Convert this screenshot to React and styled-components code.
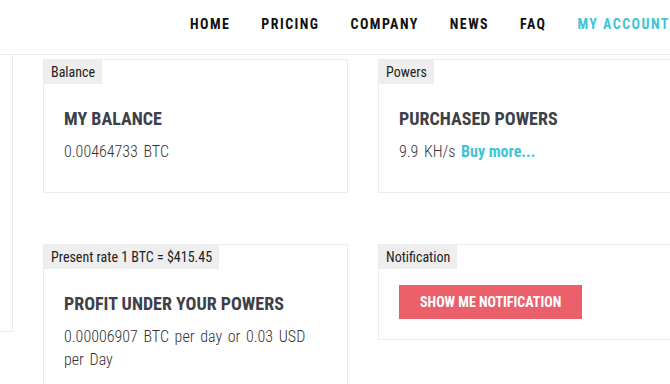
import React from 'react'
import styled, { createGlobalStyle } from 'styled-components'

const GlobalStyle = createGlobalStyle`
  html, body {
    margin: 0;
    padding: 0;
    background: #fff;
    overflow: hidden;
  }
  body {
    font-family: 'Roboto Condensed', Roboto, 'Liberation Sans', sans-serif;
    font-stretch: condensed;
    color: #3d4048;
  }
`

const Page = styled.div`
  width: 670px;
  height: 384px;
  overflow: hidden;
`

const Header = styled.header`
  height: 55px;
  border-bottom: 1px solid #e6ecee;
  box-sizing: border-box;
  display: flex;
  align-items: center;
  padding: 0 0 6px 190px;
  gap: 31px;
  white-space: nowrap;
`

const NavLink = styled.a`
  font-size: 14px;
  font-weight: 700;
  letter-spacing: 1.45px;
  text-transform: uppercase;
  color: ${props => (props.active ? '#3ec5d4' : '#111')};
  text-decoration: none;
  cursor: pointer;
`

const Main = styled.div`
  display: flex;
  align-items: flex-start;
`

const Sidebar = styled.aside`
  width: 12px;
  height: 276px;
  flex-shrink: 0;
  border-right: 1px solid #e9eced;
  border-bottom: 1px solid #e9eced;
`

const CardGrid = styled.div`
  display: grid;
  grid-template-columns: 305px 305px;
  align-items: start;
  row-gap: 51px;
  column-gap: 30px;
  padding: 4px 0 0 30px;
`

const Card = styled.section`
  border: 1px solid #ececec;
  background: #fff;
`

const Tag = styled.div`
  width: fit-content;
  background: #eeeeee;
  color: #222;
  font-size: 14px;
  line-height: 24px;
  padding: 0 7px;
`

const CardBody = styled.div`
  padding: ${props => props.compact ? '16px 20px 20px' : '23px 20px 29px'};
`

const Title = styled.h3`
  margin: 0 0 9px;
  font-size: 18px;
  line-height: 24px;
  font-weight: 700;
  color: #3d4048;
  text-transform: uppercase;
`

const Value = styled.p`
  margin: 0;
  font-size: 16px;
  line-height: 23px;
  font-weight: 300;
  word-spacing: 2px;
  color: #333;
`

const BuyLink = styled.a`
  color: #3ec5d4;
  font-weight: 700;
  word-spacing: 0;
  text-decoration: none;
  cursor: pointer;
`

const NotifyButton = styled.button`
  display: block;
  height: 34px;
  padding: 0 21px;
  border: none;
  background: #eb5f6b;
  color: #fff;
  font-family: inherit;
  font-stretch: condensed;
  font-size: 14px;
  font-weight: 700;
  text-transform: uppercase;
  cursor: pointer;
`

const navItems = ['Home', 'Pricing', 'Company', 'News', 'FAQ', 'My Account']

export default function App() {
  return (
    <Page>
      <GlobalStyle />
      <Header>
        {navItems.map(item => (
          <NavLink key={item} active={item === 'My Account' ? 1 : 0}>{item}</NavLink>
        ))}
      </Header>
      <Main>
        <Sidebar />
        <CardGrid>
          <Card>
            <Tag>Balance</Tag>
            <CardBody>
              <Title>My Balance</Title>
              <Value>0.00464733 BTC</Value>
            </CardBody>
          </Card>
          <Card>
            <Tag>Powers</Tag>
            <CardBody>
              <Title>Purchased Powers</Title>
              <Value>9.9 KH/s <BuyLink>Buy more...</BuyLink></Value>
            </CardBody>
          </Card>
          <Card>
            <Tag>Present rate 1 BTC = $415.45</Tag>
            <CardBody>
              <Title>Profit under your powers</Title>
              <Value>0.00006907 BTC per day or 0.03 USD per Day</Value>
            </CardBody>
          </Card>
          <Card>
            <Tag>Notification</Tag>
            <CardBody compact>
              <NotifyButton>Show me notification</NotifyButton>
            </CardBody>
          </Card>
        </CardGrid>
      </Main>
    </Page>
  )
}
